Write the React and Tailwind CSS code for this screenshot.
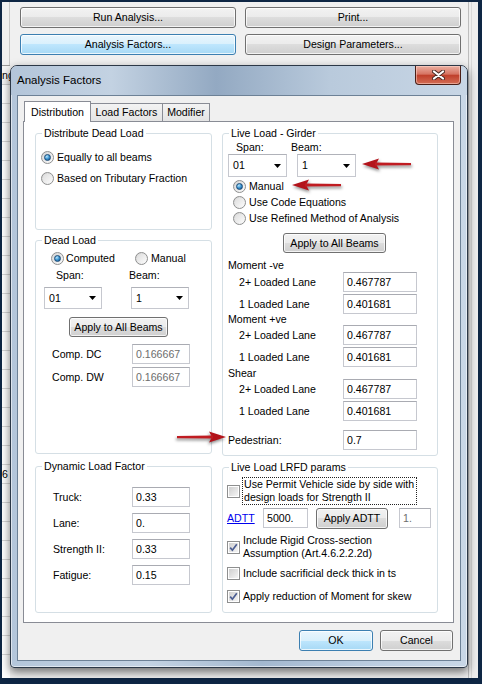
import clsx from "clsx";

const grayBtn =
  "border-[#707070] bg-[linear-gradient(#f2f2f2,#ebebeb_50%,#dddddd_50%,#cfcfcf)]";
const blueBtn =
  "border-[#3c7fb1] bg-[linear-gradient(#eaf6fd,#d9f0fc_50%,#bee6fd_50%,#a7d9f5)]";

function Btn({ children, className, blue }) {
  return (
    <div
      className={clsx(
        "flex h-[20px] shrink-0 items-center justify-center rounded-[3px] border shadow-[inset_0_0_0_1px_rgba(255,255,255,0.75)]",
        blue ? blueBtn : grayBtn,
        className
      )}
    >
      {children}
    </div>
  );
}

function Radio({ on }) {
  return (
    <span className="flex size-[13px] shrink-0 items-center justify-center rounded-full border border-[#8e8f8f] bg-[linear-gradient(135deg,#d4d4d4,#fdfdfd)]">
      {on ? (
        <span className="size-[7px] rounded-full border border-[#1b4b78] bg-[radial-gradient(circle_at_35%_30%,#b8e6fc,#3a93d0_50%,#0f4a7e)]" />
      ) : (
        <span className="size-[9px] rounded-full bg-[linear-gradient(135deg,#dedede,#fafafa)]" />
      )}
    </span>
  );
}

function Check({ on }) {
  return (
    <span className="relative flex size-[13px] shrink-0 items-center justify-center border border-[#8e8f8f] bg-white">
      <span className="size-[9px] bg-[linear-gradient(135deg,#cfcfcf,#f5f5f5)]" />
      {on && (
        <svg className="absolute left-[1px] top-[1px]" width="9" height="9" viewBox="0 0 9 9">
          <path d="M1.2 4.6 L3.4 7.2 L7.8 1.2" fill="none" stroke="#4b5d92" strokeWidth="1.7" />
        </svg>
      )}
    </span>
  );
}

function Field({ value, className, dim }) {
  return (
    <div
      className={clsx(
        "flex h-[20px] shrink-0 items-center border border-[#c6c8cf] border-t-[#a9abb2] bg-white pl-[3px]",
        dim && "text-[#6d6d6d]",
        className
      )}
    >
      {value}
    </div>
  );
}

function Sel({ value, className }) {
  return (
    <div
      className={clsx(
        "flex shrink-0 items-center justify-between border border-[#c6c8cf] border-t-[#b0b2b9] bg-white pl-[4px] pr-[5px]",
        className
      )}
    >
      <span>{value}</span>
      <svg width="7" height="4" viewBox="0 0 7 4">
        <path d="M0 0 H7 L3.5 4 Z" fill="#000" />
      </svg>
    </div>
  );
}

function Group({ title, className, children }) {
  return (
    <fieldset className={clsx("shrink-0 rounded-[3px] border border-[#d5dfe5]", className)}>
      <legend className="ml-[6px] px-[2px] leading-[13px]">{title}</legend>
      {children}
    </fieldset>
  );
}

function Arrow({ className }) {
  return (
    <svg
      className={clsx("absolute drop-shadow-[1px_2px_1.5px_rgba(0,0,0,0.45)]", className)}
      width="50"
      height="14"
      viewBox="0 0 50 14"
    >
      <path d="M0 7 L17 1.5 L14 7 L17 12.5 Z" fill="#b3141b" />
      <path d="M13 5.4 L49 6 L49 8.2 L13 8.6 Z" fill="#c01c22" />
    </svg>
  );
}

function LaneRow({ label, value, className }) {
  return (
    <div className={clsx("flex h-[20px] items-center", className)}>
      <span className="w-[120px] pl-[16px]">{label}</span>
      <Field value={value} className="w-[74px]" />
    </div>
  );
}

function DlfRow({ label, value, className }) {
  return (
    <div className={clsx("flex h-[20px] items-center", className)}>
      <span className="w-[96px] pl-[17px]">{label}</span>
      <Field value={value} className="w-[58px]" />
    </div>
  );
}

export default function App() {
  return (
    <div className="relative h-[684px] w-[482px] overflow-hidden bg-[#0e2644] pb-[6px] pl-[2px] pr-[4px] pt-[2px] font-['Liberation_Sans',Arial,sans-serif] text-[10.6px] leading-[13px] text-black">
      {/* the main window behind the dialog */}
      <div className="flex h-full bg-[#f0f0f0]">
        <div className="flex w-[8px] flex-col">
          <div className="h-[63px] shrink-0 border-r border-[#c8c8c8]" />
          <div className="flex-1 overflow-hidden border-t border-[#9a9a9a] bg-white">
            <div className="h-[19px] border-b border-[#d0d0d0] bg-[#f4f4f4] pt-[3px]">
              <span className="whitespace-nowrap">ng</span>
            </div>
            {Array.from({ length: 30 }).map((_, i) => (
              <div key={i} className="h-[19px] border-b border-[#d6d6d6] pt-[3px]">
                {i === 20 ? "6" : ""}
              </div>
            ))}
          </div>
        </div>
        <div className="flex-1 pl-[10px] pt-[5px]">
          <div className="grid grid-cols-[216px_216px] gap-x-[9px] gap-y-[6px]">
            <Btn className="h-[21px]">Run Analysis...</Btn>
            <Btn className="h-[21px]">Print...</Btn>
            <Btn blue className="h-[21px]">Analysis Factors...</Btn>
            <Btn className="h-[21px]">Design Parameters...</Btn>
          </div>
        </div>
        <div className="w-[10px] border-l border-[#bdbdbd] bg-[#eeeeee]">
          <div className="ml-[2px] h-full w-[1px] bg-[#d9d9d9]" />
        </div>
      </div>

      {/* Analysis Factors dialog */}
      <div className="absolute left-[10px] top-[65px] flex h-[603px] w-[458px] flex-col rounded-b-[4px] rounded-t-[7px] border border-[#2c3847] bg-[linear-gradient(90deg,#b4c6da,#c4d3e3_30%,#a3b8cf_55%,#bccde0_80%,#c9d7e6)] shadow-[0_4px_10px_rgba(0,0,0,0.55),inset_0_0_0_1px_rgba(255,255,255,0.55)]">
        <div className="flex h-[29px] shrink-0 justify-between rounded-t-[6px] bg-[linear-gradient(90deg,#b3c5d9,#c3d2e2_22%,#93a9c2_45%,#b9cadc_70%,#c8d6e5)] pl-[6px] pr-[6px]">
          <span className="self-center text-[11.5px]">Analysis Factors</span>
          <div className="flex h-[19px] w-[46px] items-center justify-center rounded-b-[4px] border border-t-0 border-[#4a1e16] bg-[linear-gradient(#ebb0a2,#d67462_45%,#c0402b_52%,#d36d55)] shadow-[inset_0_0_0_1px_rgba(255,220,210,0.5)]">
            <svg width="13" height="10" viewBox="0 0 13 10">
              <path d="M2 1.5 L11 8.5 M11 1.5 L2 8.5" stroke="#4a2a24" strokeWidth="4" strokeLinecap="round" />
              <path d="M2 1.5 L11 8.5 M11 1.5 L2 8.5" stroke="#ffffff" strokeWidth="2.2" strokeLinecap="round" />
            </svg>
          </div>
        </div>

        <div className="mx-[6px] flex h-[566px] shrink-0 flex-col border border-[#6d8196] bg-[#f0f0f0]">
          {/* tabs */}
          <div className="ml-[5px] mt-[5px] flex h-[20px] items-end pl-[1px]">
            <div className="relative z-10 -mb-px flex h-[21px] w-[67px] items-center justify-center border border-b-0 border-[#898c95] bg-white">
              Distribution
            </div>
            <div className="flex h-[18px] w-[72px] items-center justify-center border border-b-0 border-l-0 border-[#898c95] bg-[linear-gradient(#f3f3f3,#e4e4e4)]">
              Load Factors
            </div>
            <div className="flex h-[18px] w-[47px] items-center justify-center border border-b-0 border-l-0 border-[#898c95] bg-[linear-gradient(#f3f3f3,#e4e4e4)]">
              Modifier
            </div>
          </div>

          {/* tab page */}
          <div className="ml-[5px] flex h-[502px] w-[431px] gap-[10px] border border-[#898c95] bg-white pl-[11px] pt-[5px]">
            <div className="flex w-[177px] flex-col">
              <Group title="Distribute Dead Load" className="h-[103px]">
                <div className="flex flex-col pl-[5px] pt-[7px]">
                  <div className="flex h-[21px] items-center gap-[3px]">
                    <Radio on />
                    Equally to all beams
                  </div>
                  <div className="flex h-[21px] items-center gap-[3px]">
                    <Radio />
                    Based on Tributary Fraction
                  </div>
                </div>
              </Group>

              <Group title="Dead Load" className="mt-[4px] h-[220px]">
                <div className="flex flex-col pt-[3px]">
                  <div className="flex h-[16px] items-center pl-[15px]">
                    <div className="flex w-[84px] items-center gap-[2px]">
                      <Radio on />
                      Computed
                    </div>
                    <div className="flex items-center gap-[3px]">
                      <Radio />
                      Manual
                    </div>
                  </div>
                  <div className="mt-[2px] flex h-[14px] items-center pl-[20px]">
                    <span className="w-[73px]">Span:</span>
                    <span>Beam:</span>
                  </div>
                  <div className="mt-[5px] flex gap-[29px] pl-[8px]">
                    <Sel value="01" className="h-[22px] w-[58px]" />
                    <Sel value="1" className="h-[22px] w-[58px]" />
                  </div>
                  <Btn className="ml-[33px] mt-[8px] w-[99px]">Apply to All Beams</Btn>
                  <div className="mt-[7px] flex h-[20px] items-center">
                    <span className="w-[96px] pl-[16px]">Comp. DC</span>
                    <Field value="0.166667" dim className="w-[58px]" />
                  </div>
                  <div className="mt-[3px] flex h-[20px] items-center">
                    <span className="w-[96px] pl-[16px]">Comp. DW</span>
                    <Field value="0.166667" dim className="w-[58px]" />
                  </div>
                </div>
              </Group>

              <Group title="Dynamic Load Factor" className="mt-[6px] h-[153px]">
                <div className="flex flex-col">
                  <DlfRow label="Truck:" value="0.33" className="mt-[14px]" />
                  <DlfRow label="Lane:" value="0." className="mt-[6px]" />
                  <DlfRow label="Strength II:" value="0.33" className="mt-[6px]" />
                  <DlfRow label="Fatigue:" value="0.15" className="mt-[6px]" />
                </div>
              </Group>
            </div>

            <div className="flex w-[216px] flex-col">
              <Group title="Live Load - Girder" className="h-[329px]">
                <div className="flex flex-col">
                  <div className="flex h-[14px] items-center pl-[13px]">
                    <span className="w-[55px]">Span:</span>
                    <span>Beam:</span>
                  </div>
                  <div className="flex gap-[10px] pl-[5px]">
                    <Sel value="01" className="h-[23px] w-[59px]" />
                    <Sel value="1" className="h-[23px] w-[59px]" />
                  </div>
                  <div className="mt-[1px] flex flex-col pl-[10px]">
                    <div className="flex h-[16px] items-center gap-[3px]">
                      <Radio on />
                      Manual
                    </div>
                    <div className="flex h-[16px] items-center gap-[3px]">
                      <Radio />
                      Use Code Equations
                    </div>
                    <div className="flex h-[16px] items-center gap-[3px]">
                      <Radio />
                      Use Refined Method of Analysis
                    </div>
                  </div>
                  <Btn className="ml-[60px] mt-[7px] w-[103px]">Apply to All Beams</Btn>
                  <div className="mt-[5px] flex h-[14px] items-center pl-[5px]">Moment -ve</div>
                  <LaneRow label="2+ Loaded Lane" value="0.467787" />
                  <LaneRow label="1 Loaded Lane" value="0.401681" className="mt-[2px]" />
                  <div className="flex h-[11px] items-center pl-[5px]">Moment +ve</div>
                  <LaneRow label="2+ Loaded Lane" value="0.467787" />
                  <LaneRow label="1 Loaded Lane" value="0.401681" className="mt-[2px]" />
                  <div className="mt-[1px] flex h-[11px] items-center pl-[5px]">Shear</div>
                  <LaneRow label="2+ Loaded Lane" value="0.467787" />
                  <LaneRow label="1 Loaded Lane" value="0.401681" className="mt-[2px]" />
                  <div className="mt-[9px] flex h-[20px] items-center">
                    <span className="w-[120px] pl-[5px]">Pedestrian:</span>
                    <Field value="0.7" className="w-[74px]" />
                  </div>
                </div>
              </Group>

              <Group title="Live Load LRFD params" className="mt-[5px] h-[152px]">
                <div className="flex flex-col pl-[4px]">
                  <div className="mt-[3px] flex items-center">
                    <Check />
                    <div className="ml-[2px] w-[175px] border border-dotted border-[#222] px-[1px] leading-[13px]">
                      Use Permit Vehicle side by side with
                      <br />
                      design loads for Strength II
                    </div>
                  </div>
                  <div className="mt-[3px] flex h-[20px] items-center">
                    <span className="w-[29px] text-[#0000ee] underline">ADTT</span>
                    <Field value="5000." className="ml-[7px] w-[45px]" />
                    <Btn className="ml-[8px] h-[21px] w-[72px]">Apply ADTT</Btn>
                    <Field value="1." dim className="ml-[11px] w-[32px]" />
                  </div>
                  <div className="mt-[6px] flex items-center">
                    <Check on />
                    <div className="ml-[3px] leading-[13px]">
                      Include Rigid Cross-section
                      <br />
                      Assumption (Art.4.6.2.2.2d)
                    </div>
                  </div>
                  <div className="mt-[7px] flex h-[13px] items-center gap-[3px]">
                    <Check />
                    Include sacrificial deck thick in ts
                  </div>
                  <div className="mt-[10px] flex h-[13px] items-center gap-[3px]">
                    <Check on />
                    Apply reduction of Moment for skew
                  </div>
                </div>
              </Group>
            </div>
          </div>

          <div className="mt-[7px] flex justify-end gap-[7px] pr-[7px]">
            <Btn blue className="h-[21px] w-[74px]">OK</Btn>
            <Btn className="h-[21px] w-[73px]">Cancel</Btn>
          </div>
        </div>
      </div>

      {/* red callout arrows */}
      <Arrow className="left-[362px] top-[157px]" />
      <Arrow className="left-[292px] top-[178px]" />
      <Arrow className="left-[176px] top-[430px] -scale-x-100" />
    </div>
  );
}
